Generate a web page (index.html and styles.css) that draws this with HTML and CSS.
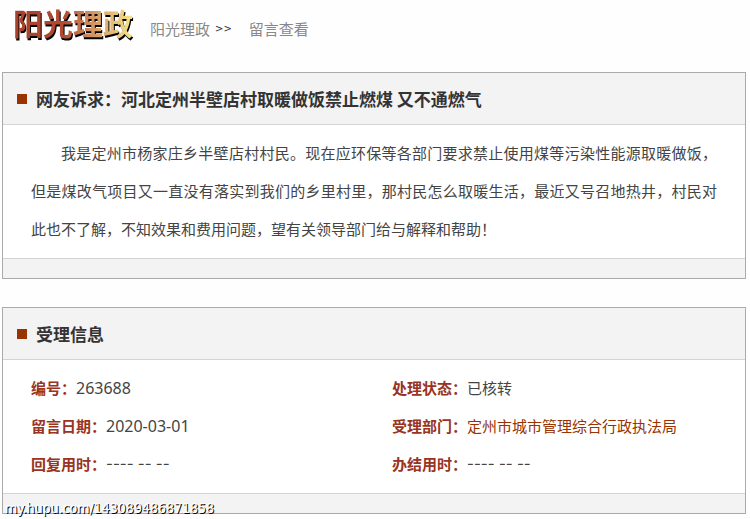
FILE: index.html
```html
<!DOCTYPE html>
<html lang="zh-CN">
<head>
    <meta charset="UTF-8">
    <meta name="viewport" content="width=device-width, initial-scale=1.0">
    <title>阳光理政 - 留言查看</title>
    <link rel="stylesheet" href="styles.css">
</head>
<body>
    <header class="top">
        <h1 class="logo">阳光理政</h1>
        <nav class="crumbs">
            <a href="#">阳光理政</a>
            <span class="arrows">&gt;&gt;</span>
            <a href="#">留言查看</a>
        </nav>
    </header>

    <section class="panel">
        <h2 class="panel-title">网友诉求：河北定州半壁店村取暖做饭禁止燃煤 又不通燃气</h2>
        <div class="panel-body">
            <p class="message">我是定州市杨家庄乡半壁店村村民。现在应环保等各部门要求禁止使用煤等污染性能源取暖做饭，但是煤改气项目又一直没有落实到我们的乡里村里，那村民怎么取暖生活，最近又号召地热井，村民对此也不了解，不知效果和费用问题，望有关领导部门给与解释和帮助！</p>
        </div>
        <div class="panel-foot"></div>
    </section>

    <section class="panel">
        <h2 class="panel-title">受理信息</h2>
        <dl class="panel-body info">
            <div class="item"><dt>编号：</dt><dd class="num">263688</dd></div>
            <div class="item"><dt>处理状态：</dt><dd>已核转</dd></div>
            <div class="item"><dt>留言日期：</dt><dd class="num">2020-03-01</dd></div>
            <div class="item"><dt>受理部门：</dt><dd><a href="#">定州市城市管理综合行政执法局</a></dd></div>
            <div class="item"><dt>回复用时：</dt><dd class="blank">---- -- --</dd></div>
            <div class="item"><dt>办结用时：</dt><dd class="blank">---- -- --</dd></div>
        </dl>
        <div class="panel-foot"></div>
    </section>

    <div class="watermark">my.hupu.com/143089486871858</div>
</body>
</html>
```
FILE: styles.css
```css
* {
    box-sizing: border-box;
}
body {
    position: relative;
    margin: 0;
    padding: 0 4px 4px 2px;
    background-color: #fefefe;
    color: #444;
    font-family: "Noto Sans CJK SC", sans-serif;
    font-size: 15px;
    line-height: 38px;
}
a {
    text-decoration: none;
}

/* logo and breadcrumb */
.top {
    display: flex;
    align-items: flex-start;
    gap: 17px;
    height: 72px;
    padding: 2px 11px 0;
}
.logo {
    margin: 0;
    font-size: 30px;
    font-weight: 700;
    line-height: 40px;
    color: transparent;
    background: linear-gradient(to right, #a8402a 0%, #b04a30 42%, #d09060 65%, #f5e78c 100%);
    -webkit-background-clip: text;
    background-clip: text;
    filter: drop-shadow(1px 2px 0 #000);
}
.crumbs {
    display: flex;
    padding-top: 8px;
}
.crumbs a {
    color: #888;
}
.arrows {
    margin: 0 17px 0 5px;
    color: #333;
    font-family: "DejaVu Sans", sans-serif;
    font-size: 10px;
}

/* panels */
.panel {
    border: 1px solid #aaa;
    background-color: #fff;
}
.panel + .panel {
    margin-top: 28px;
}
.panel-title {
    display: flex;
    align-items: center;
    gap: 9px;
    margin: 0;
    padding: 7px 14px 6px;
    border-bottom: 1px solid #d4d4d4;
    background-color: #f3f3f3;
    color: #333;
    font-size: 17px;
    font-weight: 700;
}
.panel-title::before {
    content: "";
    width: 10px;
    height: 10px;
    background-color: #993300;
}
.panel-body {
    margin: 0;
    padding: 9px 28px 10px;
}
.panel-foot {
    height: 20px;
    border-top: 1px solid #d4d4d4;
    background-color: #f3f3f3;
}
.message {
    margin: 0;
    text-indent: 2em;
    text-align: justify;
}

/* case details */
.info {
    display: grid;
    grid-template-columns: 10fr 9fr;
}
.item {
    display: flex;
}
.item dt {
    color: #993322;
    font-weight: 700;
}
.item dd {
    margin: 0;
}
.item dd a {
    color: #993300;
}
.item .num {
    font-family: "Noto Sans", sans-serif;
    font-size: 16px;
}
.item .blank {
    font-family: Inter, sans-serif;
}

.watermark {
    position: absolute;
    left: 5px;
    bottom: 0;
    color: #fff;
    font-family: "DejaVu Sans Condensed", "DejaVu Sans", sans-serif;
    font-size: 14px;
    line-height: 20px;
    text-shadow: 1px 1px 0 #000;
}
```
